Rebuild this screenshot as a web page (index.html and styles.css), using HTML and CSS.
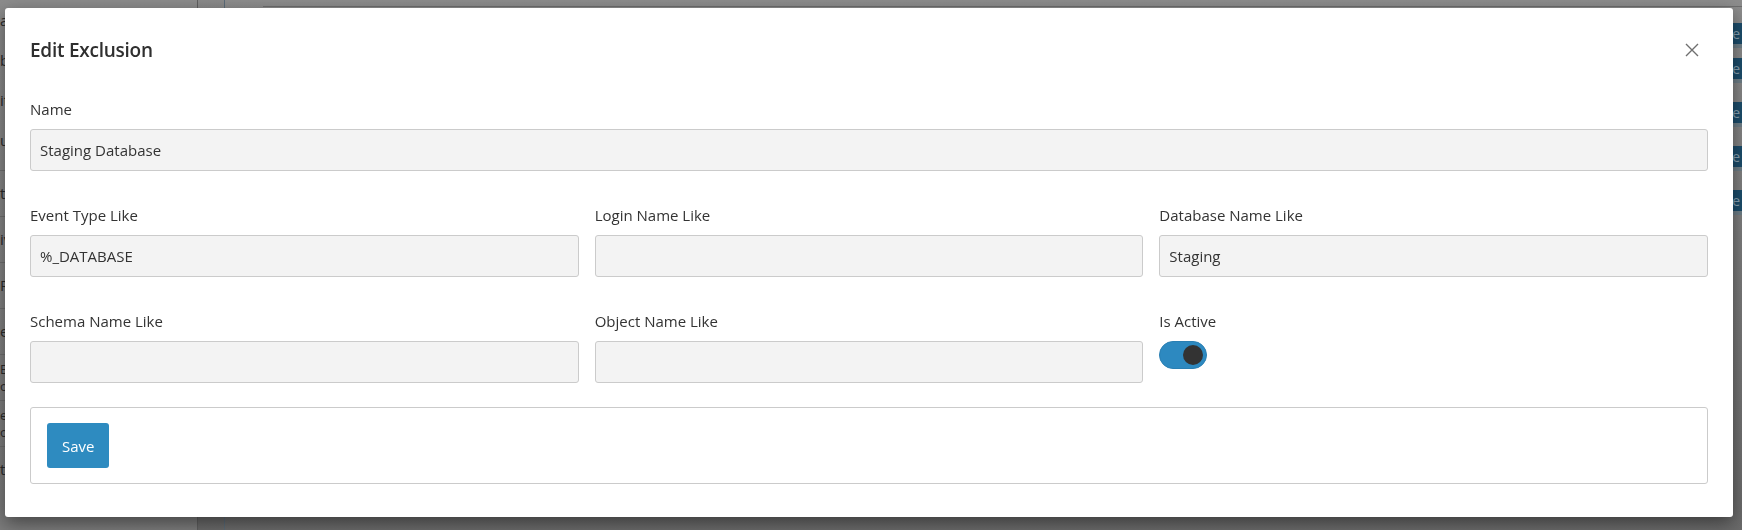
FILE: index.html
```html
<!DOCTYPE html>
<html lang="en">
<head>
<meta charset="utf-8">
<title>Edit Exclusion</title>
<link rel="stylesheet" href="styles.css">
</head>
<body>
<div class="page">
  <aside class="sidebar">
    <div class="side-item">a</div>
    <div class="side-item">b</div>
    <div class="side-item">it</div>
    <div class="side-item">u</div>
    <div class="side-item sep">t</div>
    <div class="side-item sep">iv</div>
    <div class="side-item sep">R</div>
    <div class="side-item sep">e</div>
    <div class="side-item sep two">E<br>o</div>
    <div class="side-item sep two">e<br>o</div>
    <div class="side-item sep">tl</div>
  </aside>
  <div class="rail"></div>
  <main class="main">
    <div class="main-top"></div>
    <div class="actions">
      <div class="act-btn first">te</div>
      <div class="act-btn">te</div>
      <div class="act-btn">te</div>
      <div class="act-btn">te</div>
      <div class="act-btn">te</div>
    </div>
  </main>
</div>

<div class="modal">
  <div class="modal-header">
    <h2 class="modal-title">Edit Exclusion</h2>
    <button class="close" aria-label="Close">
      <svg width="14" height="14" viewBox="0 0 14 14"><path d="M1 1 L13 13 M13 1 L1 13" stroke="#6f6f6f" stroke-width="1.4" fill="none"/></svg>
    </button>
  </div>
  <div class="modal-body">
    <div class="field">
      <label class="lbl">Name</label>
      <div class="input">Staging Database</div>
    </div>
    <div class="grid">
      <div class="field">
        <label class="lbl">Event Type Like</label>
        <div class="input">%_DATABASE</div>
      </div>
      <div class="field">
        <label class="lbl">Login Name Like</label>
        <div class="input"></div>
      </div>
      <div class="field">
        <label class="lbl">Database Name Like</label>
        <div class="input">Staging</div>
      </div>
      <div class="field">
        <label class="lbl">Schema Name Like</label>
        <div class="input"></div>
      </div>
      <div class="field">
        <label class="lbl">Object Name Like</label>
        <div class="input"></div>
      </div>
      <div class="field">
        <label class="lbl">Is Active</label>
        <div class="toggle"><span class="knob"></span></div>
      </div>
    </div>
    <div class="panel">
      <button class="btn">Save</button>
    </div>
  </div>
</div>
</body>
</html>
```

FILE: styles.css
```css
* { box-sizing: border-box; }
html, body {
  margin: 0;
  padding: 0;
  width: 1742px;
  height: 530px;
  overflow: hidden;
  font-family: "Open Sans", "Noto Sans", sans-serif;
  background: #7a7a7a;
}

.page {
  display: flex;
  height: 530px;
}
.sidebar {
  width: 198px;
  background: linear-gradient(#8c8c8c, #7c7c7c);
  border-right: 1px solid #5f5f5f;
  display: flex;
  flex-direction: column;
  padding-top: 10px;
}
.side-item {
  font-size: 15px;
  color: #2b2b2b;
  height: 40px;
  line-height: 20px;
}
.side-item.sep { border-top: 1px solid #707070; padding-top: 12px; height: 46px; }
.side-item.two { font-size: 13px; line-height: 17px; padding-top: 6px; }
.rail {
  width: 27px;
  background: linear-gradient(#8a8a8a, #6a6a6a);
  border-right: 1px solid #5b6b78;
}
.main {
  flex: 1;
  background: linear-gradient(#8d8d8d, #6b6b6b);
  display: flex;
  flex-direction: column;
  align-items: flex-end;
}
.main-top {
  align-self: stretch;
  margin: 6px 0 0 38px;
  border-top: 1px solid #6e6e6e;
}
.actions {
  display: flex;
  flex-direction: column;
  gap: 23px;
  margin-top: 16px;
}
.act-btn {
  width: 48px;
  height: 21px;
  background: #1c4d6b;
  color: #8aa4b4;
  font-size: 14px;
  line-height: 21px;
  text-align: right;
  padding-right: 2px;
  box-shadow: 0 4px 0 #6f7f88;
}
.act-btn.first { margin-bottom: -9px; }

.modal {
  position: fixed;
  left: 5px;
  top: 8px;
  width: 1728px;
  height: 509px;
  background: #fff;
  border-radius: 3px;
  box-shadow: 0 6px 18px rgba(0,0,0,0.45);
  color: #333;
}
.modal-header {
  display: flex;
  align-items: center;
  justify-content: space-between;
  padding: 27px 34px 0 25px;
  height: 57px;
}
.modal-title {
  margin: 0;
  font-size: 19px;
  letter-spacing: -0.25px;
  font-weight: 600;
  line-height: 30px;
  color: #2f2f2f;
}
.close {
  background: none;
  border: 0;
  padding: 0;
  width: 14px;
  height: 14px;
  display: flex;
}
.modal-body {
  padding: 33px 25px 0;
  display: flex;
  flex-direction: column;
  gap: 33px;
}
.grid {
  display: grid;
  grid-template-columns: repeat(3, 1fr);
  column-gap: 16px;
  row-gap: 33px;
}
.field {
  display: flex;
  flex-direction: column;
}
.lbl {
  font-size: 15px;
  line-height: 22px;
  margin-bottom: 9px;
  color: #333;
}
.input {
  height: 42px;
  background: #f3f3f3;
  border: 1px solid #cbcbcb;
  border-radius: 3px;
  padding: 0 9px;
  font-size: 15px;
  line-height: 40px;
  color: #333;
}
.toggle {
  width: 48px;
  height: 28px;
  border-radius: 14px;
  background: #2d89c0;
  border: 1px solid #2a7fb3;
  position: relative;
}
.knob {
  position: absolute;
  right: 3px;
  top: 3px;
  width: 20px;
  height: 20px;
  border-radius: 50%;
  background: #333;
}
.panel {
  margin-top: -9px;
  border: 1px solid #cbcbcb;
  border-radius: 3px;
  padding: 15px 16px;
  height: 77px;
}
.btn {
  height: 45px;
  padding: 0 15px;
  background: #2e8bc0;
  border: 0;
  border-radius: 3px;
  color: #fff;
  font-family: inherit;
  font-size: 15px;
}
```
